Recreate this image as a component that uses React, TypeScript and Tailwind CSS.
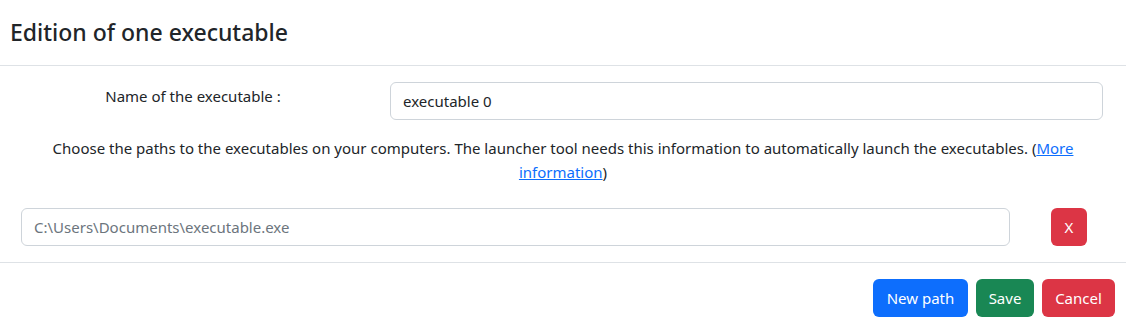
export default function App() {
  return (
    <div className="w-[1126px] h-[329px] bg-white text-[#212529] text-[16px] leading-6" style={{ fontFamily: '"Segoe UI", "Noto Sans", sans-serif' }}>
      <div className="h-[66px] flex items-center px-[10px] border-b border-[#dee2e6]">
        <h5 className="text-[23px] font-medium leading-[1.2]">Edition of one executable</h5>
      </div>
      <div className="px-4 pt-4">
        <div className="flex items-start">
          <div className="w-[354px] mr-[20px] text-center text-[15px] pt-[2px]">Name of the executable :</div>
          <input className="w-[713px] h-[38px] border border-[#ced4da] rounded-[6px] px-3 text-[15px] outline-none" defaultValue="executable 0" />
        </div>
        <p className="text-center text-[15px] mt-[16px] px-[30px]">
          Choose the paths to the executables on your computers. The launcher tool needs this information to automatically launch the executables. (<a href="#" className="text-[#0d6efd] underline">More information</a>)
        </p>
        <div className="flex items-center mt-[24px]">
          <input className="ml-[5px] w-[989px] h-[38px] border border-[#ced4da] rounded-[6px] px-3 text-[15px] outline-none placeholder:text-[#6c757d]" placeholder="C:\Users\Documents\executable.exe" />
          <button className="ml-[41px] w-[36px] h-[38px] rounded-[6px] bg-[#dc3545] text-white text-[15px]">X</button>
        </div>
      </div>
      <div className="mt-[16px] border-t border-[#dee2e6] flex justify-end gap-2 pr-[11px] pt-[16px]">
        <button className="w-[95px] h-[38px] rounded-[6px] bg-[#0d6efd] text-white text-[15px]">New path</button>
        <button className="w-[58px] h-[38px] rounded-[6px] bg-[#198754] text-white text-[15px]">Save</button>
        <button className="w-[73px] h-[38px] rounded-[6px] bg-[#dc3545] text-white text-[15px]">Cancel</button>
      </div>
    </div>
  );
}
